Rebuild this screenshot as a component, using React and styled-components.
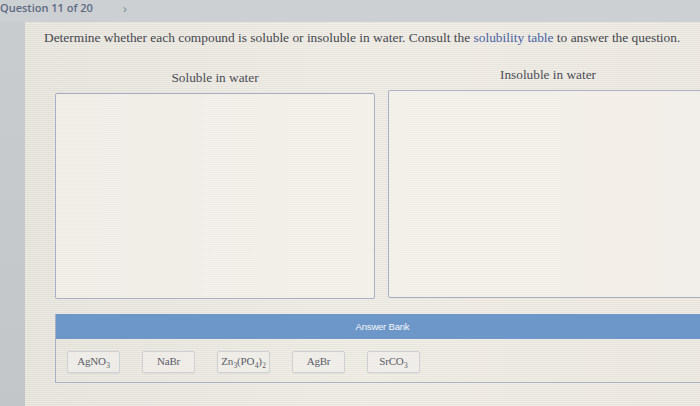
import React from "react";
import styled, { createGlobalStyle } from "styled-components";

const Global = createGlobalStyle`
  html, body { margin: 0; padding: 0; }
  body { width: 700px; height: 406px; overflow: hidden; background: #c7cacd; }
`;

const Page = styled.div`
  width: 700px;
  height: 406px;
  display: flex;
  flex-direction: column;
  background: #c6c9cc;
  overflow: hidden;
`;

const TopBar = styled.div`
  height: 22px;
  box-sizing: border-box;
  display: flex;
  align-items: flex-start;
  gap: 30px;
  padding-top: 1px;
  font-family: "Open Sans", "Liberation Sans", sans-serif;
  font-size: 11px;
  font-weight: 600;
  line-height: 14px;
  color: #5b6a84;
  background: #cdd0d2;
`;

const Chevron = styled.span`
  font-size: 13px;
  line-height: 14px;
  font-weight: 400;
  color: #7a8699;
`;

const Body = styled.div`
  flex: 1;
  display: flex;
`;

const SideStrip = styled.div`
  width: 25px;
  flex: none;
  background: linear-gradient(#c9ccce, #c3c6c8);
`;

const Panel = styled.div`
  flex: 1;
  overflow: hidden;
  padding: 8px 0 0 19px;
  background:
    repeating-linear-gradient(0deg, rgba(255,255,255,0.18) 0 1px, rgba(0,0,0,0.025) 1px 2px),
    linear-gradient(90deg, #e6e4dc 0%, #eeebe3 50%, #ece8e0 100%);
  font-family: "Liberation Serif", "DejaVu Serif", serif;
  color: #45474f;
`;

const Prompt = styled.p`
  margin: 0;
  font-size: 13.4px;
  white-space: nowrap;
  line-height: 15px;
`;

const Link = styled.span`
  color: #4a62a3;
`;

const Columns = styled.div`
  display: grid;
  grid-template-columns: 320px 320px;
  column-gap: 13px;
  margin: 0 0 0 11px;
`;

const Column = styled.div`
  display: flex;
  flex-direction: column;
  align-items: stretch;
  margin-top: ${(p) => p.$shift}px;
`;

const Heading = styled.div`
  text-align: center;
  font-size: 13.3px;
  line-height: 15px;
  margin: 25px 0 ${(p) => p.$gap}px;
  color: #4b4d56;
`;

const DropBox = styled.div`
  height: ${(p) => p.$h}px;
  border: 1px solid #a9b0c6;
  border-radius: 2px;
  background: rgba(247, 244, 238, 0.55);
`;

const Bank = styled.div`
  margin: 15px 0 0 11px;
  width: 660px;
  border: 1px solid #a8b1c4;
  border-top: none;
`;

const BankHeader = styled.div`
  height: 25px;
  background: #6e97c9;
  color: #f3f6fb;
  display: flex;
  align-items: center;
  justify-content: center;
  font-family: "Liberation Sans", "Arial", sans-serif;
  font-size: 9.5px;
  letter-spacing: -0.2px;
  padding-right: 7px;
`;

const ChipRow = styled.div`
  height: 43px;
  display: flex;
  align-items: center;
  gap: 22px;
  padding-left: 11px;
  padding-top: 2px;
  box-sizing: border-box;
`;

const Chip = styled.div`
  width: 53px;
  height: 22px;
  box-sizing: border-box;
  border: 1px solid #cfd0d4;
  border-radius: 2px;
  background: rgba(240, 238, 234, 0.8);
  display: flex;
  align-items: center;
  justify-content: center;
  font-size: 11px;
  line-height: 12px;
  color: #5a5c66;
  letter-spacing: -0.2px;
  box-shadow: 0 1px 1px rgba(0,0,0,0.05);
`;

const Formula = styled.span`
  display: inline-block;
  padding-bottom: 2px;
  sub {
    font-size: 7.5px;
    line-height: 0;
    vertical-align: baseline;
    position: relative;
    top: 3px;
    margin-left: 0.5px;
  }
`;

const compounds = [
  <>AgNO<sub>3</sub></>,
  <>NaBr</>,
  <>Zn<sub>3</sub>(PO<sub>4</sub>)<sub>2</sub></>,
  <>AgBr</>,
  <>SrCO<sub>3</sub></>,
];

export default function App() {
  return (
    <>
      <Global />
      <Page>
        <TopBar>
          <span>Question 11 of 20</span>
          <Chevron>›</Chevron>
        </TopBar>
        <Body>
          <SideStrip />
          <Panel>
            <Prompt>
              Determine whether each compound is soluble or insoluble in water. Consult the{" "}
              <Link>solubility table</Link> to answer the question.
            </Prompt>
            <Columns>
              <Column $shift={0}>
                <Heading $gap={8}>Soluble in water</Heading>
                <DropBox $h={204} />
              </Column>
              <Column $shift={-3}>
                <Heading $gap={8}>Insoluble in water</Heading>
                <DropBox $h={206} />
              </Column>
            </Columns>
            <Bank>
              <BankHeader>Answer Bank</BankHeader>
              <ChipRow>
                {compounds.map((c, i) => (
                  <Chip key={i}>
                    <Formula>{c}</Formula>
                  </Chip>
                ))}
              </ChipRow>
            </Bank>
          </Panel>
        </Body>
      </Page>
    </>
  );
}
